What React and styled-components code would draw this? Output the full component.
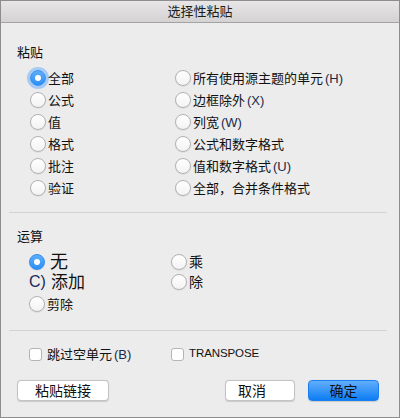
import React from "react";
import styled, { createGlobalStyle } from "styled-components";

const GlobalStyle = createGlobalStyle`
  html, body {
    margin: 0;
    padding: 0;
    background: #ececec;
  }
  * {
    box-sizing: border-box;
  }
`;

const FONT = `"Liberation Sans", "Noto Sans CJK SC", sans-serif`;

const Window = styled.div`
  width: 400px;
  height: 418px;
  border: 1px solid #8d8d8d;
  background: #ececec;
  display: flex;
  flex-direction: column;
  font-family: ${FONT};
  color: #111;
`;

const TitleBar = styled.div`
  height: 22px;
  flex: none;
  padding-top: 2px;
  border-bottom: 1px solid #a3a3a3;
  background: linear-gradient(#e7e5e5, #d4d2d2);
  text-align: center;
  font-size: 13px;
  line-height: 18px;
  color: #1c1c1c;
`;

const Main = styled.div`
  padding: 0 12px 0 8px;
  display: flex;
  flex-direction: column;
`;

const SectionLabel = styled.div`
  margin-top: ${(p) => p.$top}px;
  padding-left: 8px;
  font-size: 13px;
  line-height: 16px;
  height: 16px;
`;

const RadioGrid = styled.div`
  display: grid;
  grid-template-columns: ${(p) => p.$col}px 1fr;
  grid-auto-flow: column;
  grid-template-rows: ${(p) => p.$rows};
  margin-top: 6px;
  margin-left: ${(p) => p.$left}px;
`;

const Option = styled.label`
  display: flex;
  align-items: center;
  gap: ${(p) => p.$gap ?? 2}px;
  font-size: ${(p) => p.$size ?? 13}px;
  line-height: 1;
  white-space: nowrap;
`;

const Radio = styled.span`
  width: 16px;
  height: 16px;
  flex: none;
  border-radius: 50%;
  display: flex;
  align-items: center;
  justify-content: center;
  border: 1px solid ${(p) => (p.$checked ? "#2f8ef3" : "#b2b2b2")};
  background: ${(p) =>
    p.$checked
      ? "linear-gradient(#5eaefc, #2c8ff6)"
      : "linear-gradient(#ffffff, #f3f3f3)"};
  box-shadow: ${(p) =>
    p.$focus
      ? "0 0 0 3px rgba(110, 175, 250, 0.55)"
      : "0 0.5px 1px rgba(0,0,0,0.12)"};

  &::after {
    content: "";
    display: ${(p) => (p.$checked ? "block" : "none")};
    width: 6px;
    height: 6px;
    border-radius: 50%;
    background: #fff;
  }
`;

const Hint = styled.span`
  font-family: "Liberation Sans", sans-serif;
  font-size: 13px;
  color: #1b2a4a;
`;

const Glitch = styled.span`
  font-family: "Liberation Sans", sans-serif;
  font-size: 16px;
  color: #1b2a5a;
  width: 22px;
`;

const Divider = styled.div`
  height: 1px;
  background: #d3d3d3;
  margin-top: ${(p) => p.$top}px;
`;

const CheckRow = styled.div`
  display: grid;
  grid-template-columns: 142px 1fr;
  margin-top: 15px;
  margin-left: 20px;
  height: 16px;
`;

const Check = styled.span`
  width: 13px;
  height: 13px;
  flex: none;
  border: 1px solid #b4b4b4;
  border-radius: 3px;
  background: #fff;
  margin-right: 3px;
`;

const Latin = styled.span`
  font-family: "Liberation Sans", sans-serif;
  font-size: 11.5px;
  letter-spacing: -0.1px;
`;

const ButtonRow = styled.div`
  display: flex;
  align-items: center;
  margin-top: 18px;
  padding: 0 8px;
  gap: 13px;
`;

const Spacer = styled.div`
  flex: 1;
`;

const Button = styled.button`
  width: ${(p) => p.$w}px;
  height: 21px;
  padding: 0 ${(p) => p.$shift ?? 0}px 0 0;
  border-radius: 4px;
  font-family: ${FONT};
  font-size: 14px;
  line-height: 1;
  cursor: default;
  border: 1px solid ${(p) => (p.$primary ? "#1c7ff0" : "#c3c3c3")};
  background: ${(p) =>
    p.$primary ? "linear-gradient(#62aefa, #0d7df5)" : "#ffffff"};
  color: #111;
  box-shadow: 0 0.5px 1px rgba(0, 0, 0, 0.15);
`;

const pasteOptions = [
  ["全部", true],
  ["公式"],
  ["值"],
  ["格式"],
  ["批注"],
  ["验证"],
  ["所有使用源主题的单元", false, "(H)"],
  ["边框除外", false, "(X)"],
  ["列宽", false, "(W)"],
  ["公式和数字格式"],
  ["值和数字格式", false, "(U)"],
  ["全部，合并条件格式"],
];

const App = () => {
  return (
    <>
      <GlobalStyle />
      <Window>
        <TitleBar>选择性粘贴</TitleBar>
        <Main>
          <SectionLabel $top={22}>粘贴</SectionLabel>
          <RadioGrid $col={145} $rows="repeat(6, 22px)" $left={21}>
            {pasteOptions.map(([text, checked, hint]) => (
              <Option key={text}>
                <Radio $checked={checked} $focus={checked} />
                {text}
                {hint && <Hint>{hint}</Hint>}
              </Option>
            ))}
          </RadioGrid>

          <Divider $top={13} />

          <SectionLabel $top={16}>运算</SectionLabel>
          <RadioGrid $col={142} $rows="21px 20px 24px" $left={20}>
            <Option $size={18} $gap={5}>
              <Radio $checked />无
            </Option>
            <Option $size={17} $gap={0}>
              <Glitch>C)</Glitch>添加
            </Option>
            <Option>
              <Radio />剪除
            </Option>
            <Option $size={14}>
              <Radio />乘
            </Option>
            <Option $size={14}>
              <Radio />除
            </Option>
          </RadioGrid>

          <Divider $top={14} />

          <CheckRow>
            <Option>
              <Check />
              跳过空单元<Hint>(B)</Hint>
            </Option>
            <Option>
              <Check />
              <Latin>TRANSPOSE</Latin>
            </Option>
          </CheckRow>

          <ButtonRow>
            <Button $w={92}>粘贴链接</Button>
            <Spacer />
            <Button $w={70} $shift={16}>
              取消
            </Button>
            <Button $w={71} $primary>
              确定
            </Button>
          </ButtonRow>
        </Main>
      </Window>
    </>
  );
};

export default App;
